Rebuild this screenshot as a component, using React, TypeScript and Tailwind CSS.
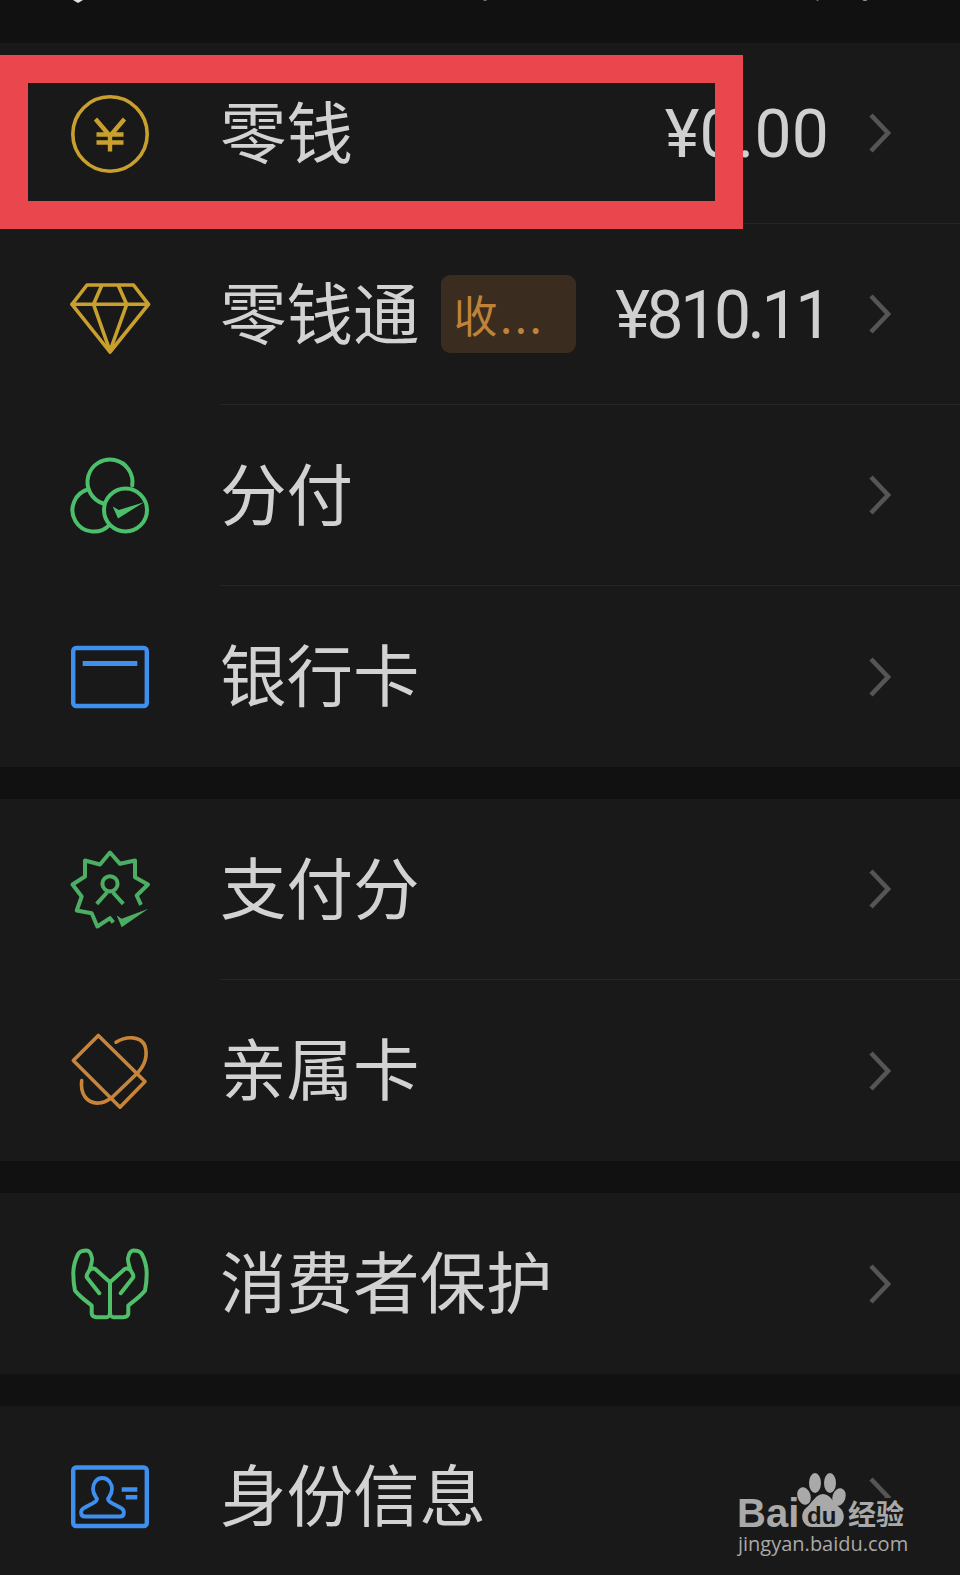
import React from 'react';

const cjk = "font-['Noto_Sans_CJK_SC','Noto_Sans',sans-serif]";

// Icons are drawn on a 78x78 box, traced off the reference
function Icon({ color, width = 3.8, children }: { color: string; width?: number; children: React.ReactNode }) {
  return (
    <svg
      viewBox="0 0 78 78"
      className="w-[78px] h-[78px] shrink-0 overflow-visible"
      fill="none"
      stroke={color}
      strokeWidth={width}
      strokeLinecap="round"
      strokeLinejoin="round"
    >
      {children}
    </svg>
  );
}

const YuanIcon = () => (
  <Icon color="#c9a02e" width={3.6}>
    <circle cx="39" cy="39" r="37.2" />
    <path d="M24.5 24 39 41 53.5 24M39 41v15.5M25.5 39.5h27M25.5 47.5h27" strokeWidth={4.4} strokeLinecap="butt" />
  </Icon>
);

const DiamondIcon = () => (
  <Icon color="#c9a02e" width={3.6}>
    <path d="M16 9h46.5l15 19.3L39 76 1 28.3z" />
    <path d="M1 28.3h76.5M30.5 10l-8 18.3L39 75l16.7-46.7L47.5 10" />
  </Icon>
);

const FenfuIcon = () => (
  <Icon color="#4cbf6c" width={4}>
    <path d="M61.2 28.6A22.5 22.5 0 1 0 32.3 46.5" />
    <path d="M17.3 32.3A21.5 21.5 0 1 0 38.3 68.1" />
    <circle cx="54.5" cy="53" r="21.5" />
    <path d="M41.7 49.5 47.8 53 73 45.2 47 61.5z" fill="#4cbf6c" stroke="none" />
  </Icon>
);

const CardIcon = () => (
  <Icon color="#3f8fef" width={4.4}>
    <rect x="2.2" y="10" width="73.6" height="58" rx="3" />
    <path d="M11.7 25.5h54.6" strokeWidth={5} strokeLinecap="butt" />
  </Icon>
);

const ScoreIcon = () => (
  <Icon color="#4bae63" width={4}>
    <path d="M70 53.8 65.7 44.5 77 33.5 64 26.2V9.5L49 12.8 39 1.5 29 13.5 14 9.5V25.5L1.5 33.5 10.7 45.5 5.7 59.5 20.7 62.2 26.3 75.5 39 67.2 42.3 71.5" strokeLinecap="butt" />
    <circle cx="39" cy="32.8" r="7.6" />
    <path d="M36 41.5 25.7 52.8M42 41.5 52.3 52.8" strokeLinecap="butt" />
    <path d="M45.7 64.5 50.7 67.8 77.3 57.8 50.7 76.2z" fill="#4bae63" stroke="none" />
  </Icon>
);

const FamilyCardIcon = () => (
  <Icon color="#c8853a" width={3.6}>
    <path d="M27.3 3.5 2.3 28.5 49 75.2 74 49.5z" />
    <path d="M45 10.2C55 4 70 3.5 74 14 77 24 73 34 66.3 41.2L40.7 65.8C36 69 32 71 28 71 16 72 9 62 10.7 48.5" />
  </Icon>
);

const HandsIcon = () => {
  const half = 'M39 37.2 24 23.8C21 22.8 18 25 17.3 27.2 16 29 15.5 31 15.7 32.2L28.3 48.2M19 23.8C20.5 18 22 14 20.7 12.2 20 7 17 5.5 15.7 5.5 11 5.5 8.5 7 7.3 8.8 3.5 16 2.3 22 2.3 28.8 2.3 35 3 41 4 45.5 8 51 15 56 20.7 60.5V68.8C21 71 23 72.2 25.7 72.2H35.7C37.5 72.2 39 70 39 67.2V37.2';
  return (
    <Icon color="#4fbf69" width={4}>
      <path d={half} />
      <path d={half} transform="matrix(-1 0 0 1 78 0)" />
    </Icon>
  );
};

const IdCardIcon = () => (
  <Icon color="#3f8fef" width={4.4}>
    <rect x="2.2" y="9.5" width="73.6" height="58.5" rx="3" />
    <path
      d="M31.3 20C25 20 22 26 22 31 22 36 25 39 26 41 26 44 22 45 13 50 9 52 9 58.5 14 58.5H49C54 58.5 54 52 50 50 41 45 37 44 37 41 38 39 41 36 41 31 41 26 37.5 20 31.3 20z"
      strokeWidth={3.8}
    />
    <path d="M50.7 31.5h15.6M54.7 39.2h11.6" strokeWidth={4.6} strokeLinecap="butt" />
  </Icon>
);

function Row({
  icon,
  label,
  badge,
  amount,
  amountClass = '',
  divider,
}: {
  icon: React.ReactNode;
  label: string;
  badge?: string;
  amount?: string;
  amountClass?: string;
  divider?: boolean;
}) {
  return (
    <div className="flex h-[181px] items-center pl-[71px]">
      {icon}
      <div className={`ml-[71px] flex h-full flex-1 items-center pr-[69px] ${divider ? 'border-b border-[#252525]' : ''}`}>
        <span className={`${cjk} mb-[8px] text-[66.5px] leading-none text-[#d2d2d2]`}>{label}</span>
        {badge && (
          <span className={`${cjk} ml-[21px] flex h-[78px] w-[135px] items-center rounded-[9px] bg-[#3a2c1f] pl-[13px] text-[44px] leading-none tracking-[2.5px] text-[#bf8238]`}>
            {badge}
          </span>
        )}
        {amount && (
          <span className={`ml-auto mt-[4px] font-['Roboto',sans-serif] text-[66px] leading-none text-[#d0d0d0] ${amountClass}`}>
            {amount}
          </span>
        )}
        <svg viewBox="0 0 22 40" className={`h-[40px] w-[22px] shrink-0 ${amount ? 'ml-[40px]' : 'ml-auto'}`} fill="none" stroke="#555555" strokeWidth={4.6}>
          <path d="M2 2 19 20 2 38" />
        </svg>
      </div>
    </div>
  );
}

function Watermark() {
  return (
    <div className="absolute left-[736px] top-[1498px] h-[58px] w-[172px] bg-[#191919] text-[#a9a9a9]">
      <div className="flex h-[30px] items-center">
        <span className="ml-[1px] font-['Liberation_Sans',sans-serif] text-[40px] font-bold leading-none">Bai</span>
        <span className={`${cjk} ml-auto mr-[4px] text-[28px] font-bold leading-none`}>经验</span>
      </div>
      <svg viewBox="0 0 52 60" className="absolute left-[61px] top-[-28px] h-[60px] w-[52px]" fill="#a9a9a9">
        <ellipse cx="18" cy="13" rx="6" ry="10" />
        <ellipse cx="33" cy="13" rx="6" ry="10" />
        <ellipse cx="7" cy="26" rx="6.5" ry="9" transform="rotate(-18 7 26)" />
        <ellipse cx="42" cy="27" rx="6.5" ry="9" transform="rotate(18 42 27)" />
        <path d="M26 24C33 24 37 33 43 38 50 44 47 57 37 57H15C5 57 2 44 9 38 15 33 19 24 26 24z" />
      </svg>
      <span className="absolute left-[71px] top-[6px] font-['Liberation_Sans',sans-serif] text-[24px] font-bold leading-none text-[#191919]">du</span>
      <div className="mt-[4px] ml-[2px] whitespace-nowrap font-['Open_Sans',sans-serif] text-[20px] leading-[24px]">jingyan.baidu.com</div>
    </div>
  );
}

export default function App() {
  return (
    <div className="relative h-[1575px] w-[960px] overflow-hidden bg-[#111111]">
      {/* header is cut off by the screenshot, only the bottom of the glyphs shows */}
      <div className={`${cjk} flex h-[43px] items-start overflow-hidden text-[48px] leading-none text-[#e4e4e4]`}>
        <svg viewBox="0 0 10 3" className="ml-[73px] h-[3px] w-[10px] shrink-0" fill="#e4e4e4">
          <path d="M0 0H10L5 3z" />
        </svg>
        <span className="ml-[361px] mt-[-49px]">钱包</span>
        <span className="ml-[253px] mt-[-49px]">账单</span>
      </div>

      <div className="bg-[#191919]">
        <Row icon={<YuanIcon />} label="零钱" amount="¥0.00" amountClass="tracking-[0.2px]" divider />
        <Row icon={<DiamondIcon />} label="零钱通" badge="收..." amount="¥810.11" amountClass="tracking-[-3.4px]" divider />
        <Row icon={<FenfuIcon />} label="分付" divider />
        <Row icon={<CardIcon />} label="银行卡" />
      </div>

      <div className="mt-[32px] bg-[#191919]">
        <Row icon={<ScoreIcon />} label="支付分" divider />
        <Row icon={<FamilyCardIcon />} label="亲属卡" />
      </div>

      <div className="mt-[32px] bg-[#191919]">
        <Row icon={<HandsIcon />} label="消费者保护" />
      </div>

      <div className="mt-[32px] bg-[#191919]">
        <Row icon={<IdCardIcon />} label="身份信息" />
      </div>

      {/* red highlight drawn over the first row */}
      <div className="absolute left-0 top-[55px] h-[174px] w-[743px] border-[28px] border-[#ea464e]" />

      <Watermark />
    </div>
  );
}
